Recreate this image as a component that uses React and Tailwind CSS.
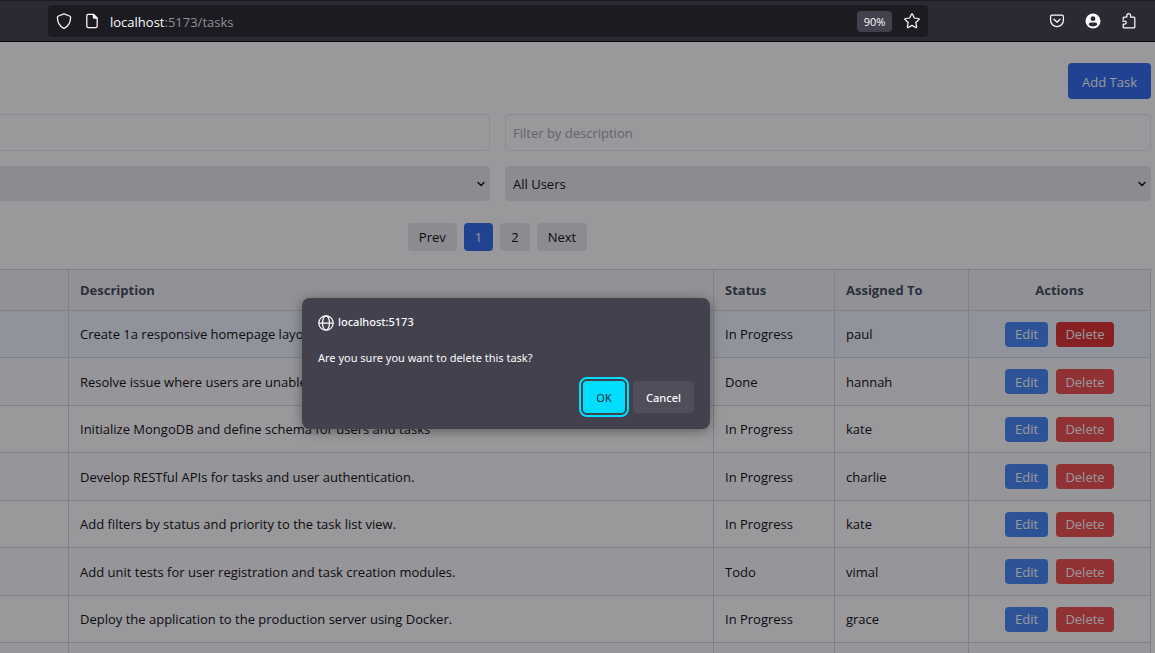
import { ChevronDown } from "lucide-react";

const tasks = [
  { description: "Create 1a responsive homepage layout", status: "In Progress", user: "paul", active: true },
  { description: "Resolve issue where users are unable", status: "Done", user: "hannah" },
  { description: "Initialize MongoDB and define schema for users and tasks", status: "In Progress", user: "kate" },
  { description: "Develop RESTful APIs for tasks and user authentication.", status: "In Progress", user: "charlie" },
  { description: "Add filters by status and priority to the task list view.", status: "In Progress", user: "kate" },
  { description: "Add unit tests for user registration and task creation modules.", status: "Todo", user: "vimal" },
  { description: "Deploy the application to the production server using Docker.", status: "In Progress", user: "grace" },
];

function Icon({ children, className = "size-4" }) {
  return (
    <svg
      viewBox="0 0 16 16"
      className={className}
      fill="none"
      stroke="currentColor"
      strokeWidth="1.25"
      strokeLinecap="round"
      strokeLinejoin="round"
      aria-hidden="true"
    >
      {children}
    </svg>
  );
}

function BrowserBar() {
  return (
    <header className="flex h-[42px] shrink-0 items-center border-t border-b border-t-[#1c1b22] border-b-[#0c0c0d] bg-[#2b2a33] pr-[18px] pl-12 text-[#fbfbfe]">
      <div className="flex h-8 flex-1 items-center rounded bg-[#1c1b22] px-2">
        <button type="button" aria-label="Tracking protection">
          <Icon>
            <path d="M8 .9 13.600 3c.6.2 1 .7 1 1.300 0 4.600-1.900 8.600-6 10.800a1.200 1.200 0 0 1-1.200 0c-4.100-2.200-6-6.200-6-10.800 0-.6.4-1.100 1-1.300z" />
          </Icon>
        </button>
        <button type="button" aria-label="Site information" className="ml-3">
          <Icon>
            <path d="M9.500 1.400H4.200c-.8 0-1.400.6-1.400 1.400v10.400c0 .8.6 1.400 1.400 1.400h7.600c.8 0 1.400-.6 1.400-1.400V5.100z" />
            <path d="M9.400 1.500v2.400c0 .8.500 1.300 1.300 1.300h2.400z" fill="currentColor" />
          </Icon>
        </button>
        <p className="ml-[10px] flex-1 pt-1 text-[13px] text-[#8f8f97]">
          <span className="text-[#fbfbfe]">localhost</span>:5173/tasks
        </p>
        <button type="button" className="h-[21px] w-[35px] rounded-sm bg-[#42414d] pt-0.5 text-[11px]">
          90%
        </button>
        <button type="button" aria-label="Bookmark this page" className="ml-3">
          <Icon>
            <path d="M7.500 1.100a.6.6 0 0 1 1 0l1.800 3.900 4.300.5c.5.1.7.6.4 1l-3.200 3 .8 4.300c.1.500-.4.900-.9.700L8 12.400l-3.700 2.100c-.5.200-1-.2-.9-.7l.8-4.300-3.200-3c-.3-.4-.1-.9.4-1l4.300-.5z" />
          </Icon>
        </button>
      </div>
      <nav aria-label="Toolbar" className="ml-[121px] flex gap-5">
        <button type="button" aria-label="Save to Pocket">
          <Icon>
            <path d="M3 2h10c.8 0 1.400.6 1.400 1.400v3.800a6.400 6.400 0 0 1-12.800 0V3.400C1.600 2.600 2.200 2 3 2z" />
            <path d="m5 6.300 3 2.900 3-2.900" />
          </Icon>
        </button>
        <button type="button" aria-label="Account">
          <svg viewBox="0 0 16 16" className="size-4" aria-hidden="true">
            <circle cx="8" cy="8" r="7.500" fill="#fbfbfe" />
            <circle cx="8" cy="5.700" r="2.400" fill="#2b2a33" />
            <path d="M3.800 11.700c0-1.300.9-2.200 2.200-2.200h4c1.300 0 2.200.9 2.200 2.200-1 1.100-2.500 1.700-4.200 1.700s-3.200-.6-4.200-1.700z" fill="#2b2a33" />
          </svg>
        </button>
        <button type="button" aria-label="Extensions">
          <Icon>
            <path d="M2.200 6.300V4.900c0-.5.4-.9.9-.9h2.700V2.600a1.900 1.900 0 0 1 3.800 0V4h3.300c.5 0 .9.4.9.900v9c0 .5-.4.900-.9.900H3.100a.9.900 0 0 1-.9-.9v-2.700h1.500a1.600 1.600 0 0 0 0-3.200H1.600" />
          </Icon>
        </button>
      </nav>
    </header>
  );
}

function FilterSelect({ label, option }) {
  return (
    <div className="relative">
      <select aria-label={label} className="h-[35px] w-full appearance-none rounded-sm bg-gray-200 px-2 pt-0.5 text-[13px] text-black">
        <option>{option}</option>
      </select>
      <ChevronDown className="pointer-events-none absolute top-3 right-[3px] size-3" strokeWidth={3} aria-hidden="true" />
    </div>
  );
}

function PageButton({ children, current }) {
  return (
    <button
      type="button"
      aria-current={current ? "page" : undefined}
      className={
        current
          ? "h-7 rounded-sm bg-[#2563eb] px-[11px] pt-0.5 text-white"
          : "h-7 rounded-sm bg-gray-200 px-[11px] pt-0.5 text-black"
      }
    >
      {children}
    </button>
  );
}

function TaskTable() {
  return (
    <table className="mt-[18px] w-full table-fixed border-collapse text-left text-[13px] text-black [&_td]:border [&_td]:border-gray-300 [&_td]:px-[11px] [&_th]:border [&_th]:border-gray-300 [&_th]:px-[11px] [&_th]:pt-0.5">
      <colgroup>
        <col className="w-[224px]" />
        <col />
        <col className="w-[121px]" />
        <col className="w-[134px]" />
        <col className="w-[182px]" />
      </colgroup>
      <thead>
        <tr className="h-[41px] bg-gray-100 text-gray-700">
          <th />
          <th>Description</th>
          <th>Status</th>
          <th>Assigned To</th>
          <th className="text-center">Actions</th>
        </tr>
      </thead>
      <tbody>
        {tasks.map((task) => (
          <tr
            key={task.description}
            className={task.active ? "h-[47px] bg-blue-50" : "odd:h-[47px] even:h-12 even:bg-gray-50"}
          >
            <td />
            <td className="pt-0.5">{task.description}</td>
            <td className="pt-0.5">{task.status}</td>
            <td className="pt-0.5">{task.user}</td>
            <td>
              <div className="flex justify-center gap-2 text-white">
                <button type="button" className="h-[25px] w-[43px] rounded-sm bg-[#3b82f6] pt-0.5">
                  Edit
                </button>
                <button
                  type="button"
                  className={
                    task.active
                      ? "h-[25px] w-[58px] rounded-sm bg-[#dc2626] pt-0.5"
                      : "h-[25px] w-[58px] rounded-sm bg-[#ef4444] pt-0.5"
                  }
                >
                  Delete
                </button>
              </div>
            </td>
          </tr>
        ))}
        <tr className="h-12 bg-gray-50">
          <td />
          <td />
          <td />
          <td />
          <td />
        </tr>
      </tbody>
    </table>
  );
}

function ConfirmDialog() {
  return (
    <div className="absolute inset-0 bg-[#1c1b22]/45">
      <div
        role="alertdialog"
        aria-label="localhost:5173"
        className="mt-64 ml-[302px] w-[408px] rounded-lg bg-[#42414d] p-4 font-['Noto_Sans','Open_Sans',sans-serif] text-[11px] text-[#fbfbfe] shadow-[0_2px_12px_rgba(0,0,0,0.4)]"
      >
        <div className="flex h-[17px] items-center gap-1 font-medium">
          <Icon>
            <circle cx="8" cy="8" r="7.200" />
            <ellipse cx="8" cy="8" rx="3.500" ry="7.200" />
            <path d="M1 8h14" />
          </Icon>
          localhost:5173
        </div>
        <p className="mt-[19px] leading-4">Are you sure you want to delete this task?</p>
        <div className="mt-[15px] flex justify-end gap-2">
          <button
            type="button"
            className="h-8 w-[42px] rounded-sm bg-[#00ddff] pt-0.5 text-[#2b2a33] outline-2 outline-offset-2 outline-[#00ddff]"
          >
            OK
          </button>
          <button type="button" className="h-8 w-[61px] rounded-sm bg-[#4f4e5a] pt-0.5 font-medium">
            Cancel
          </button>
        </div>
      </div>
    </div>
  );
}

export default function App() {
  return (
    <div className="flex h-screen flex-col overflow-hidden font-['Open_Sans','Noto_Sans',sans-serif]">
      <BrowserBar />
      <div className="relative flex-1 overflow-hidden bg-white">
        <main className="-ml-[156px] pt-[21px] pr-1">
          <div className="flex justify-end">
            <button type="button" className="h-9 rounded-sm bg-[#2563eb] px-[14px] pt-1 text-[13px] text-white">
              Add Task
            </button>
          </div>
          <div className="mt-[15px] grid grid-cols-2 gap-[15px]">
            <input
              type="text"
              aria-label="Filter by title"
              className="h-[37px] rounded-sm border border-gray-200 px-2 text-[13px]"
            />
            <input
              type="text"
              aria-label="Filter by description"
              placeholder="Filter by description"
              className="h-[37px] rounded-sm border border-gray-200 px-[7px] text-[13px] placeholder:text-gray-400"
            />
            <FilterSelect label="Status" option="" />
            <FilterSelect label="User" option="All Users" />
          </div>
          <nav aria-label="Pagination" className="mt-[22px] flex justify-center gap-[7px] text-[13px]">
            <PageButton>Prev</PageButton>
            <PageButton current>1</PageButton>
            <PageButton>2</PageButton>
            <PageButton>Next</PageButton>
          </nav>
          <TaskTable />
        </main>
        <ConfirmDialog />
      </div>
    </div>
  );
}
